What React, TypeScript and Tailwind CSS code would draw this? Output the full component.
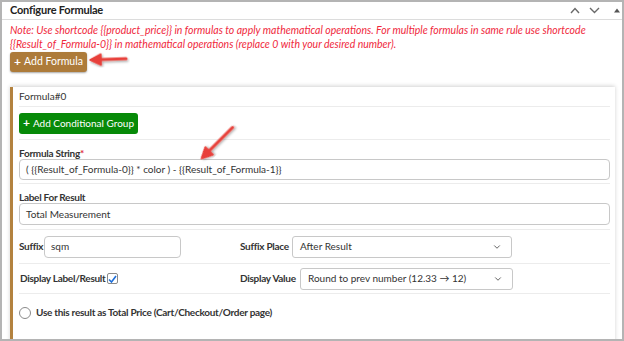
import { ChevronDown } from "lucide-react";

const font = { fontFamily: '"Segoe UI", Lato, "Noto Sans", sans-serif' };

function RedArrow({ className, rotate, len }: { className: string; rotate: number; len: number }) {
  return (
    <svg
      className={className}
      width={len + 4}
      height="16"
      viewBox={`0 0 ${len + 4} 16`}
      style={{ transform: `rotate(${rotate}deg)`, transformOrigin: "0 50%" }}
    >
      <defs>
        <filter id={`sh${rotate}`} x="-20%" y="-50%" width="140%" height="200%">
          <feDropShadow dx="1" dy="1.5" stdDeviation="1" floodColor="#000" floodOpacity="0.35" />
        </filter>
      </defs>
      <g filter={`url(#sh${rotate})`}>
        <path d={`M12 8 L${len} 8`} stroke="#e8413b" strokeWidth="3.2" strokeLinecap="round" />
        <path d="M2 8 L13 2.5 L13 13.5 Z" fill="#e8413b" stroke="#e8413b" strokeWidth="1.5" strokeLinejoin="round" />
      </g>
    </svg>
  );
}

function Select({ value, className }: { value: string; className: string }) {
  return (
    <div
      className={`flex shrink-0 items-center justify-between rounded-[3px] border border-[#c8c8c8] bg-white pl-[7px] pr-[9px] text-[10px] text-[#333] ${className}`}
    >
      <span>{value}</span>
      <ChevronDown size={10} strokeWidth={2.2} className="text-[#555]" />
    </div>
  );
}

const label = "whitespace-nowrap text-[10px] font-bold tracking-[-0.28px] text-[#333]";

export default function App() {
  return (
    <div
      style={font}
      className="relative h-[341px] w-[624px] overflow-hidden border-2 border-[#b4b4b4] bg-white text-[#2a2a2a]"
    >
      {/* header */}
      <div className="flex h-[18px] items-center justify-between border-b border-[#dcdcdc] pl-[8px] pr-[2px]">
        <span className="text-[11px] font-bold tracking-[-0.2px] text-[#222]">Configure Formulae</span>
        <div className="flex items-center gap-[9px] text-[#666]">
          <svg width="10" height="7" viewBox="0 0 10 7">
            <path d="M1 6 L5 1.5 L9 6" fill="none" stroke="#6a6a6a" strokeWidth="1.4" />
          </svg>
          <svg width="11" height="7" viewBox="0 0 11 7">
            <path d="M1 1 L5.5 5.5 L10 1" fill="none" stroke="#6a6a6a" strokeWidth="1.4" />
          </svg>
          <svg width="6" height="5" viewBox="0 0 6 5" className="ml-[5px]">
            <path d="M0 4.5 L3 0.5 L6 4.5 Z" fill="#555" />
          </svg>
        </div>
      </div>

      <div className="pl-[8px] pr-[5px] pt-[3px]">
        <p className="text-[10.5px] italic leading-[14px] text-[#f0283c]">
          Note: Use shortcode {"{{product_price}}"} in formulas to apply mathematical operations. For multiple
          formulas in same rule use shortcode {"{{Result_of_Formula-0}}"} in mathematical operations (replace 0
          with your desired number).
        </p>

        <div className="relative mt-[1px] flex">
          <button className="flex h-[20px] w-[77px] items-center justify-center gap-[3px] rounded-[3px] bg-[#ad7b3a] text-[10.5px] text-white shadow-[0_1px_2px_rgba(0,0,0,0.35)]">
            <span className="text-[12px] font-bold leading-none">+</span>
            Add Formula
          </button>
          <RedArrow className="absolute left-[78px] top-[0px]" rotate={-2} len={38} />
        </div>

        {/* formula panel */}
        <div className="mt-[15px] mr-[2px] h-[260px] border-l-[3px] border-[#b3823f] bg-white pl-[6px] pr-[5px] shadow-[0_-1px_4px_rgba(0,0,0,0.18)]">
          <div className="flex h-[20px] items-center border-b border-[#ececec] text-[10px] text-[#333]">
            Formula#0
          </div>

          <div className="flex h-[33px] items-center border-b border-[#ececec]">
            <button className="flex h-[21px] w-[119px] items-center justify-center gap-[3px] rounded-[3px] bg-[#078a08] text-[10px] text-white">
              <span className="text-[12px] font-bold leading-none">+</span>
              Add Conditional Group
            </button>
          </div>

          <div className="relative border-b border-[#ececec] pb-[3px] pt-[7px]">
            <div className={`${label} leading-[12px]`}>
              Formula String<span className="text-[#e0263a]">*</span>
            </div>
            <div className="flex h-[21px] items-center rounded-[4px] border border-[#c8c8c8] px-[6px] text-[10px] text-[#333]">
              ( {"{{Result_of_Formula-0}}"} * color ) - {"{{Result_of_Formula-1}}"}
            </div>
            <RedArrow className="absolute left-[181px] top-[12px]" rotate={-45} len={46} />
          </div>

          <div className="border-b border-[#ececec] pb-[4px] pt-[7px]">
            <div className={`${label} leading-[12px]`}>Label For Result</div>
            <div className="flex h-[22px] items-center rounded-[4px] border border-[#c8c8c8] px-[6px] text-[10px] text-[#333]">
              Total Measurement
            </div>
          </div>

          <div className="flex h-[34px] items-center border-b border-[#ececec]">
            <div className="flex w-[221px] shrink-0 items-center">
              <span className={`${label} w-[25px]`}>Suffix</span>
              <div className="flex h-[22px] w-[137px] items-center rounded-[4px] border border-[#c8c8c8] px-[6px] text-[10px] text-[#333]">
                sqm
              </div>
            </div>
            <span className={`${label} w-[52px] shrink-0`}>Suffix Place</span>
            <Select value="After Result" className="h-[22px] w-[220px]" />
          </div>

          <div className="flex h-[30px] items-center border-b border-[#ececec]">
            <div className="flex w-[221px] shrink-0 items-center pl-[1px]">
              <span className={label}>Display Label/Result</span>
              <span className="ml-[1px] flex h-[11px] w-[11px] items-center justify-center rounded-[2px] border border-[#8a8a8a]">
                <svg width="9" height="8" viewBox="0 0 9 8">
                  <path d="M1 4.5 L3.5 7 L8 1" fill="none" stroke="#1e6fd9" strokeWidth="1.6" />
                </svg>
              </span>
            </div>
            <span className={`${label} w-[60px] shrink-0`}>Display Value</span>
            <Select value="Round to prev number (12.33 → 12)" className="h-[22px] w-[213px]" />
          </div>

          <div className="flex h-[37px] items-center gap-[5px]">
            <span className="h-[12px] w-[12px] rounded-full border border-[#8a8a8a]" />
            <span className={label}>Use this result as Total Price (Cart/Checkout/Order page)</span>
          </div>
        </div>
      </div>
    </div>
  );
}
